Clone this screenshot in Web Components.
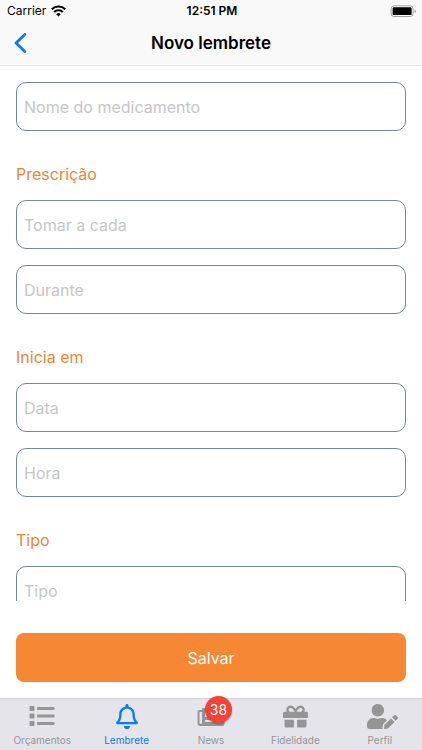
<!DOCTYPE html>
<html lang="pt-BR">
<head>
<meta charset="utf-8">
<meta name="viewport" content="width=device-width, initial-scale=1">
<title>Novo lembrete</title>
<style>
html, body { height: 100%; }
body { margin: 0; background: #fff; color: #000; font-family: Inter, "Liberation Sans", sans-serif; }
</style>
</head>
<body>
<reminder-screen></reminder-screen>
<script>
const define = (name, html, setup) => customElements.define(name, class extends HTMLElement {
  connectedCallback() {
    if (this.shadowRoot) return;
    const root = this.attachShadow({ mode: 'open' });
    const template = document.createElement('template');
    template.innerHTML = '<style>*{box-sizing:border-box}svg{display:block}</style>' + html;
    root.append(template.content.cloneNode(true));
    if (setup) setup(this, root);
  }
});

define('status-bar', `
<style>
:host { display: grid; grid-template-columns: 1fr auto 1fr; align-items: center; height: 22px; padding: 0 5px 0 7px; font-size: 12px; line-height: 16px; }
.carrier { display: flex; align-items: center; gap: 5px; }
time { font-weight: 600; font-size: 12px; }
.battery { justify-self: end; }
</style>
<span class="carrier">Carrier
  <svg width="15" height="12" viewBox="0 0 15 12" aria-label="Wi-Fi"><g fill="none" stroke="#000" stroke-width="2.2"><path d="M.7 4.3a9.7 9.7 0 0 1 13.6 0"/><path d="M3.2 7a6.1 6.1 0 0 1 8.6 0"/></g><path d="M5.2 9.2a3.3 3.3 0 0 1 4.6 0L7.5 11.6z"/></svg>
</span>
<time>12:51 PM</time>
<svg class="battery" width="27" height="12" viewBox="0 0 27 12" aria-label="Bateria"><rect x="1.1" y=".9" width="22" height="10.6" rx="3" fill="#fff" stroke="#a0a0a0"/><rect x="2.6" y="2.3" width="19" height="7.8" rx="1.2"/><path d="M24.6 4.4c1.6.6 1.6 3 0 3.6z" fill="#888"/></svg>`);

define('nav-header', `
<style>
:host { display: grid; grid-template-columns: 40px 1fr 40px; align-items: center; height: 44px; border-bottom: 1px solid #e7e7e8; }
button { border: 0; background: none; padding: 0 0 2px 13px; height: 40px; cursor: pointer; }
h1 { margin: 0; padding-bottom: 1px; text-align: center; font-size: 17px; line-height: 24px; font-weight: 600; }
</style>
<button type="button" aria-label="Voltar"><svg width="14" height="20" viewBox="0 0 14 20"><path d="M11.8 1.5 3 10l8.8 8.5" fill="none" stroke="#0b7bf0" stroke-width="2.8" stroke-linecap="round" stroke-linejoin="round"/></svg></button>
<h1><slot></slot></h1>`);

define('text-field', `
<style>
:host { display: block; }
input { display: block; width: 100%; height: 49px; margin: 0; padding: 0 7px; border: 1px solid #71899d; border-radius: 10px; background: #fff; color: #000; font: 400 16px/24px Inter, "Liberation Sans", sans-serif; outline-offset: 1px; }
input::placeholder { color: #c6c6c9; opacity: 1; }
</style>
<input type="text">`, (host, root) => {
  const input = root.querySelector('input');
  input.placeholder = host.getAttribute('placeholder');
  input.setAttribute('aria-label', host.getAttribute('placeholder'));
});

define('field-group', `
<style>
:host { display: flex; flex-direction: column; gap: 16px; }
h2 { margin: 15px 0 -2px; color: #ef8537; font-size: 16px; line-height: 24px; font-weight: 400; }
:host(:not([heading])) h2 { display: none; }
</style>
<h2></h2><slot></slot>`, (host, root) => {
  root.querySelector('h2').textContent = host.getAttribute('heading') || '';
});

define('primary-button', `
<style>
:host { display: block; }
button { display: block; width: 100%; height: 49px; border: 0; border-radius: 8px; background: #f68733; color: #fff; font: 400 16px/24px Inter, "Liberation Sans", sans-serif; cursor: pointer; }
</style>
<button type="button"><slot></slot></button>`);

const icons = {
  list: '<svg width="26" height="22" viewBox="0 0 26 22"><g fill="currentColor"><rect x=".5" y="0" width="5" height="5" rx="1"/><rect x=".5" y="7.5" width="5" height="5" rx="1"/><rect x=".5" y="15" width="5" height="5" rx="1"/><rect x="8" y="1" width="17.5" height="3" rx=".9"/><rect x="8" y="8.5" width="17.5" height="3" rx=".9"/><rect x="8" y="16" width="17.5" height="3" rx=".9"/></g></svg>',
  bell: '<svg width="22" height="25" viewBox="0 0 448 512"><path fill="currentColor" d="M439.39 362.29c-19.32-20.76-55.47-51.99-55.47-154.29 0-77.7-54.48-139.9-127.94-155.16V32c0-17.67-14.32-32-31.98-32s-31.98 14.33-31.98 32v20.84C118.56 68.1 64.08 130.3 64.08 208c0 102.3-36.15 133.53-55.47 154.29-6 6.45-8.66 14.16-8.61 21.71.11 16.4 12.98 32 32.1 32h383.8c19.12 0 32-15.6 32.1-32 .05-7.55-2.61-15.27-8.61-21.71zM67.53 368c21.22-27.97 44.42-74.33 44.53-159.42 0-.2-.06-.38-.06-.58 0-61.86 50.14-112 112-112s112 50.14 112 112c0 .2-.06.38-.06.58.11 85.1 23.31 131.46 44.53 159.42H67.53zM224 512c35.32 0 63.97-28.65 63.97-64H160.03c0 35.35 28.65 64 63.97 64z"/></svg>',
  news: '<svg width="28" height="20" viewBox="0 0 28 20"><path fill="currentColor" fill-rule="evenodd" d="M6 1h20.5q1 0 1 1v15q0 2-2 2H3.5Q.5 19 .5 16V5q0-2 2-2H5V2q0-1 1-1zM5 5H2.5v11q0 1 1.2 1Q5 17 5 16zM8 4v6h8V4zm10 0v2h7V4zm0 4v2h7V8zM8 13v2h8v-2zm10 0v2h7v-2z"/></svg>',
  gift: '<svg width="25" height="25" viewBox="0 0 512 512"><path fill="currentColor" d="M32 448c0 17.7 14.3 32 32 32h160V320H32v128zm256 32h160c17.7 0 32-14.3 32-32V320H288v160zm192-320h-42.1c6.2-12.1 10.1-25.5 10.1-40 0-48.5-39.5-88-88-88-41.6 0-68.5 21.3-103 68.3-34.5-47-61.4-68.3-103-68.3-48.5 0-88 39.5-88 88 0 14.5 3.8 27.9 10.1 40H32c-17.7 0-32 14.3-32 32v80c0 8.8 7.2 16 16 16h480c8.8 0 16-7.2 16-16v-80c0-17.7-14.3-32-32-32zm-326.1 0c-22.1 0-40-17.9-40-40s17.9-40 40-40c19.9 0 34.6 3.3 86.1 80h-86.1zm206.1 0h-86.1c51.4-76.5 65.7-80 86.1-80 22.1 0 40 17.9 40 40s-17.9 40-40 40z"/></svg>',
  profile: '<svg width="31" height="25" viewBox="0 0 640 512"><path fill="currentColor" d="M224 256c70.7 0 128-57.3 128-128S294.7 0 224 0 96 57.3 96 128s57.3 128 128 128zm89.6 32h-16.7c-22.2 10.2-46.9 16-72.9 16s-50.6-5.8-72.9-16h-16.7C60.2 288 0 348.2 0 422.4V464c0 26.5 21.5 48 48 48h274.9c-2.4-6.8-3.4-14-2.6-21.3l6.8-60.9 1.2-11.1 7.9-7.9 77.3-77.3c-24.5-27.7-60-45.5-99.9-45.5zm45.3 145.3-6.8 61c-1.1 10.2 7.5 18.8 17.6 17.6l60.9-6.8 137.9-137.9-71.7-71.7-137.9 137.8zM633 268.9 595.1 231c-9.3-9.3-24.5-9.3-33.8 0l-37.8 37.8-4.1 4.1 71.8 71.7 41.8-41.8c9.3-9.4 9.3-24.5 0-33.9z"/></svg>'
};

define('tab-item', `
<style>
:host { display: block; flex: 1 1 0; min-width: 0; color: #959597; }
:host([active]) { color: #0b7bf5; }
a { display: flex; flex-direction: column; align-items: center; gap: 4px; padding-top: 5px; color: inherit; text-decoration: none; font-size: 10px; line-height: 14px; }
.icon { position: relative; display: grid; place-items: center; height: 25px; }
.badge { position: absolute; left: 8px; top: -8px; width: 27px; height: 27px; border-radius: 50%; background: #f44336; color: #fff; font-size: 14px; line-height: 27px; text-align: center; box-shadow: 0 1px 2px #0005; }
:host([icon="profile"]) svg { margin-left: 5px; }
</style>
<a href="#"><span class="icon"></span><span><slot></slot></span></a>`, (host, root) => {
  const icon = root.querySelector('.icon');
  icon.innerHTML = icons[host.getAttribute('icon')];
  if (host.hasAttribute('active')) root.querySelector('a').setAttribute('aria-current', 'page');
  if (host.hasAttribute('badge')) {
    const badge = document.createElement('span');
    badge.className = 'badge';
    badge.textContent = host.getAttribute('badge');
    icon.append(badge);
  }
});

define('tab-bar', `
<style>
:host { display: block; background: #e5e4ea; border-top: 1px solid #d3d2d8; }
nav { display: flex; height: 51px; }
</style>
<nav aria-label="Principal"><slot></slot></nav>`);

define('reminder-screen', `
<style>
:host { display: flex; flex-direction: column; height: 100vh; }
header { background: #f9f9f9; flex: none; }
main { flex: 1 1 0; min-height: 0; overflow-y: auto; scrollbar-width: none; padding: 16px 16px 0; }
main::-webkit-scrollbar { display: none; }
form { display: flex; flex-direction: column; gap: 16px; }
footer { flex: none; padding: 32px 16px 16px; }
tab-bar { flex: none; }
</style>
<header><status-bar></status-bar><nav-header>Novo lembrete</nav-header></header>
<main><form>
  <field-group><text-field placeholder="Nome do medicamento"></text-field></field-group>
  <field-group heading="Prescrição"><text-field placeholder="Tomar a cada"></text-field><text-field placeholder="Durante"></text-field></field-group>
  <field-group heading="Inicia em"><text-field placeholder="Data"></text-field><text-field placeholder="Hora"></text-field></field-group>
  <field-group heading="Tipo"><text-field placeholder="Tipo"></text-field></field-group>
</form></main>
<footer><primary-button>Salvar</primary-button></footer>
<tab-bar>
  <tab-item icon="list">Orçamentos</tab-item>
  <tab-item icon="bell" active>Lembrete</tab-item>
  <tab-item icon="news" badge="38">News</tab-item>
  <tab-item icon="gift">Fidelidade</tab-item>
  <tab-item icon="profile">Perfil</tab-item>
</tab-bar>`);
</script>
</body>
</html>
